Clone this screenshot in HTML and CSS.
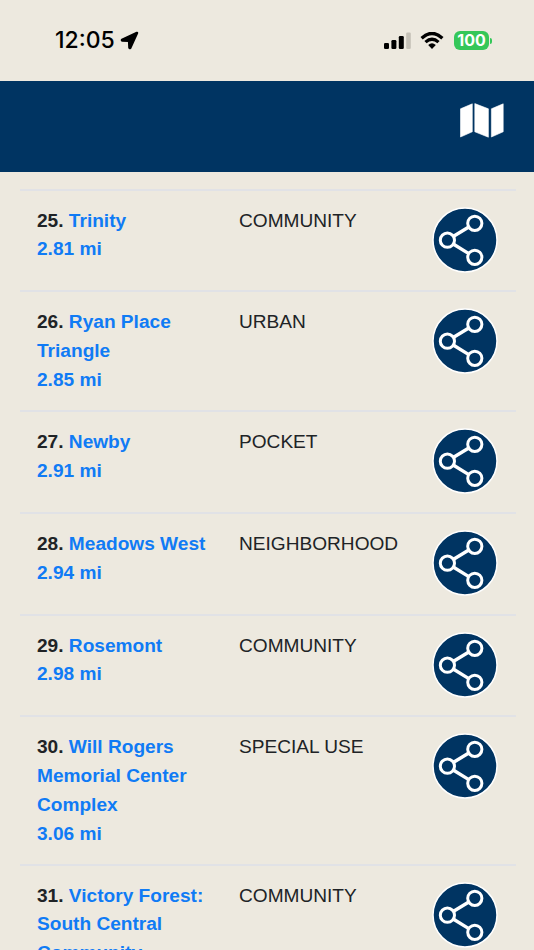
FILE: index.html
```html
<!DOCTYPE html>
<html lang="en">
<head>
  <meta charset="UTF-8" />
  <meta name="viewport" content="width=device-width, initial-scale=1.0"/>
  <title>Parks Near Me</title>
  <link rel="stylesheet" href="styles.css">
</head>
<body>

  <div class="status-bar">
    <div class="clock">
      <span class="time">12:05</span>
      <svg class="location" viewBox="0 0 19 19"><path d="M16.8 1.6 L1.8 8.4 Q1 9.6 2.2 9.9 L8.7 10.2 L9 16.7 Q9.4 18 10.6 17.1 L17.4 2.2 Q17.6 1.3 16.8 1.6Z" fill="#000" stroke="#000" stroke-width="1.6" stroke-linejoin="round"/></svg>
    </div>
    <div class="indicators">
      <svg class="signal" viewBox="0 0 27 18">
        <rect x="0" y="11" width="5" height="6" rx="1.3"/>
        <rect x="7.4" y="8" width="5" height="9" rx="1.3"/>
        <rect x="14.8" y="4" width="5" height="13" rx="1.3"/>
        <rect x="22.2" y="0.5" width="4.6" height="16.5" rx="1.3" fill="#c4c0b6"/>
      </svg>
      <svg class="wifi" viewBox="0 0 24 18">
        <path d="M1.6 6.2 Q12 -3.4 22.4 6.2 M5.5 10.1 Q12 4.2 18.5 10.1" fill="none" stroke="#000" stroke-width="3.3"/>
        <path d="M8.2 12.9 Q12 9.6 15.8 12.9 L12 16.9Z"/>
      </svg>
      <span class="battery">100</span>
      <span class="battery-tip"></span>
    </div>
  </div>

  <header class="navbar">
    <svg class="map-icon" viewBox="0 0 44 35">
      <path d="M0.5 5.8 L12.3 0.8 V28.8 L0.5 34Z M14.8 0.6 L28.4 5.8 V34.2 L14.8 28.8Z M31.4 5.8 L43.2 0.8 V28.8 L31.4 34Z" fill="#fff" stroke="#fff" stroke-width="0.6" stroke-linejoin="round"/>
    </svg>
  </header>

  <svg width="0" height="0" class="symbols">
    <symbol id="share" viewBox="0 0 66 66">
      <circle cx="33" cy="33" r="32" fill="#003462" stroke="#fff" stroke-width="1.5"/>
      <g fill="none" stroke="#fff" stroke-width="3">
        <path d="M21.6 29.2 L36.4 20.2 M21.6 37.2 L36.4 46.4" stroke-width="3.4"/>
        <circle cx="15.4" cy="33.2" r="7.1"/>
        <circle cx="42.8" cy="16.3" r="7.1"/>
        <circle cx="42.8" cy="50.3" r="7.1"/>
      </g>
    </symbol>
  </svg>

  <main class="park-list">
    <div class="park">
      <div class="name">25. <a>Trinity<br>2.81 mi</a></div>
      <div class="type">COMMUNITY</div>
      <svg class="share"><use href="#share"/></svg>
    </div>
    <div class="park">
      <div class="name">26. <a>Ryan Place Triangle<br>2.85 mi</a></div>
      <div class="type">URBAN</div>
      <svg class="share"><use href="#share"/></svg>
    </div>
    <div class="park">
      <div class="name">27. <a>Newby<br>2.91 mi</a></div>
      <div class="type">POCKET</div>
      <svg class="share"><use href="#share"/></svg>
    </div>
    <div class="park">
      <div class="name">28. <a>Meadows West<br>2.94 mi</a></div>
      <div class="type">NEIGHBORHOOD</div>
      <svg class="share"><use href="#share"/></svg>
    </div>
    <div class="park">
      <div class="name">29. <a>Rosemont<br>2.98 mi</a></div>
      <div class="type">COMMUNITY</div>
      <svg class="share"><use href="#share"/></svg>
    </div>
    <div class="park">
      <div class="name">30. <a>Will Rogers Memorial Center Complex<br>3.06 mi</a></div>
      <div class="type">SPECIAL USE</div>
      <svg class="share"><use href="#share"/></svg>
    </div>
    <div class="park">
      <div class="name">31. <a>Victory Forest: South Central Community</a></div>
      <div class="type">COMMUNITY</div>
      <svg class="share"><use href="#share"/></svg>
    </div>
  </main>

</body>
</html>
```
FILE: styles.css
```css
:root {
  --bg: #ede9df;
  --navy: #003462;
  --text: #202326;
  --link: #107bf5;
  --line: #e1e2e6;
}

* {
  box-sizing: border-box;
}

body {
  margin: 0;
  height: 950px;
  overflow: hidden;
  display: flex;
  flex-direction: column;
  background-color: var(--bg);
  color: var(--text);
  font-family: "Liberation Sans", Arial, sans-serif;
  font-size: 19.1px;
  line-height: 28.7px;
}

svg {
  display: block;
}

.symbols {
  position: absolute;
}

.status-bar {
  flex: none;
  height: 81px;
  padding: 0 42px 0 55px;
  display: flex;
  justify-content: space-between;
  align-items: center;
}

.clock, .indicators {
  display: flex;
  align-items: center;
}

.time {
  font-family: Inter, sans-serif;
  font-size: 23px;
  font-weight: 500;
  color: #000;
}

.location {
  width: 19px;
  height: 19px;
  margin-left: 5px;
}

.signal {
  width: 27px;
  height: 18px;
}

.wifi {
  width: 24px;
  height: 18px;
  margin: 0 10px 0 9px;
}

.battery {
  width: 35px;
  height: 19px;
  border-radius: 6px;
  background: #35c759;
  color: #fff;
  font-family: Inter, sans-serif;
  font-size: 16px;
  font-weight: 700;
  line-height: 19px;
  text-align: center;
}

.battery-tip {
  width: 2px;
  height: 6px;
  margin-left: 1px;
  border-radius: 0 2px 2px 0;
  background: #35c759;
}

.navbar {
  flex: none;
  height: 91px;
  padding: 22px 30px 0 0;
  display: flex;
  justify-content: flex-end;
  background: var(--navy);
}

.map-icon {
  width: 44px;
  height: 35px;
}

.park-list {
  padding: 16.6px 18px 0 20px;
}

.park {
  display: grid;
  grid-template-columns: 202px 193px 66px;
  align-items: start;
  min-height: 101.8px;
  padding: 16.1px 0 15.4px 17px;
  border-top: 2px solid var(--line);
}

.name {
  padding-right: 30px;
  font-weight: bold;
}

.name a {
  color: var(--link);
}

.share {
  width: 66px;
  height: 66px;
}
```
